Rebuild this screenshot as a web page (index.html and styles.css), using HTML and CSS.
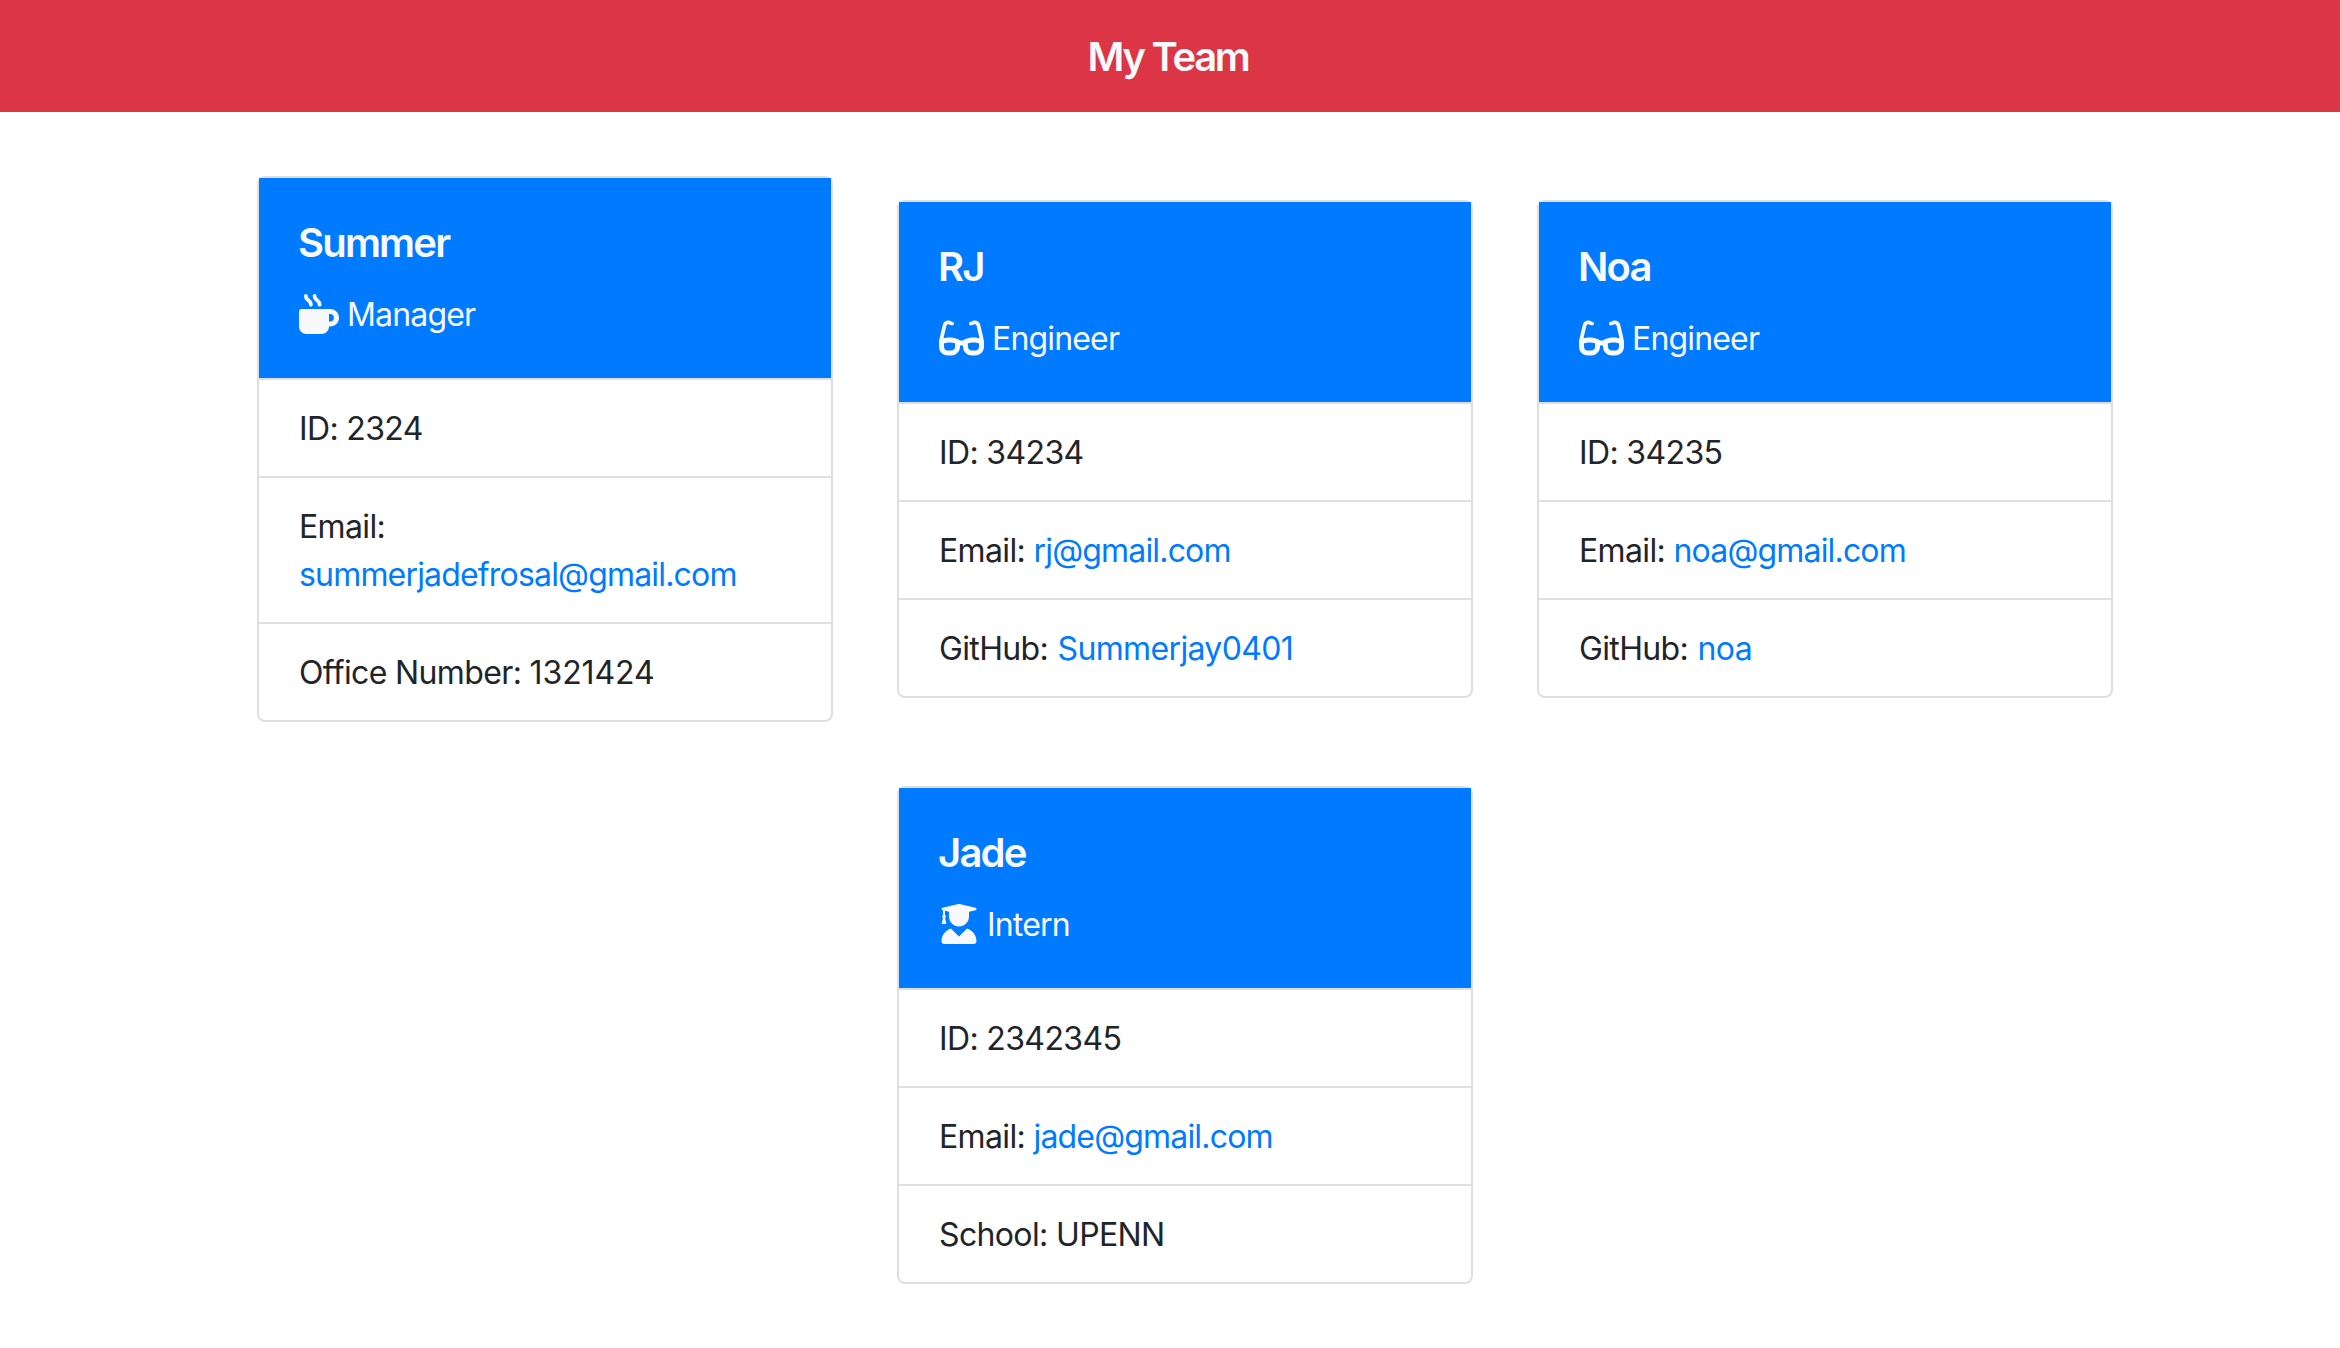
FILE: index.html
```html
<!DOCTYPE html>
<html lang="en">
<head>
<meta charset="utf-8">
<title>My Team</title>
<link rel="stylesheet" href="styles.css">
</head>
<body>
<svg class="sprite" aria-hidden="true">
  <symbol id="mug" viewBox="0 0 512 512"><path d="M88 0C74.700 0 64 10.700 64 24c0 38.900 23.400 59.400 39.100 73.100l1.100 1C120.500 112.300 128 119.900 128 136c0 13.300 10.700 24 24 24s24-10.700 24-24c0-38.900-23.400-59.400-39.100-73.100l-1.100-1C119.500 47.700 112 40.100 112 24c0-13.300-10.700-24-24-24zM32 192c-17.700 0-32 14.300-32 32V416c0 53 43 96 96 96H288c53 0 96-43 96-96h16c61.900 0 112-50.100 112-112s-50.100-112-112-112H352 32zm352 64h16c26.500 0 48 21.500 48 48s-21.500 48-48 48H384V256zM224 24c0-13.300-10.700-24-24-24s-24 10.700-24 24c0 38.900 23.400 59.400 39.100 73.100l1.100 1C232.500 112.300 240 119.900 240 136c0 13.300 10.700 24 24 24s24-10.700 24-24c0-38.900-23.400-59.400-39.100-73.100l-1.100-1C231.500 47.700 224 40.100 224 24z"/></symbol>
  <symbol id="glasses" viewBox="0 0 576 512"><path d="M118.600 80c-11.500 0-21.400 7.900-24 19.100L57 260.300c20.500-6.200 48.300-12.300 78.700-12.300c32.300 0 61.800 6.900 82.800 13.500c10.600 3.300 19.300 6.700 25.400 9.200c3.100 1.300 5.500 2.400 7.300 3.200c.9 .4 1.600 .7 2.100 1l.6 .3c5.800 2.900 10.400 7.300 13.500 12.700h41.200c3.100-5.300 7.700-9.800 13.500-12.700l.6-.3c.5-.2 1.200-.6 2.100-1c1.800-.8 4.200-1.900 7.300-3.200c6.100-2.600 14.800-5.900 25.400-9.200c21-6.600 50.400-13.500 82.800-13.500c30.400 0 58.200 6.100 78.700 12.300L481.400 99.100c-2.600-11.200-12.600-19.100-24-19.100c-3.100 0-6.200 .6-9.200 1.800L416.900 94.300c-12.300 4.900-26.300-1.100-31.200-13.400s1.100-26.300 13.400-31.200l31.300-12.500c8.600-3.400 17.700-5.200 27-5.200c33.800 0 63.100 23.300 70.800 56.200l43.900 188c1.700 7.300 2.900 14.700 3.500 22.100c.3 1.900 .5 3.800 .5 5.700V368c0 61.900-50.100 112-112 112H419.700c-59.400 0-108.500-46.400-111.800-105.800L306.600 352H269.400l-1.200 22.200C264.900 433.600 215.800 480 156.300 480H112C50.100 480 0 429.900 0 368V304c0-1.900 .2-3.800 .5-5.700c.6-7.400 1.800-14.800 3.500-22.100l43.900-188C55.500 55.300 84.800 32 118.600 32c9.200 0 18.400 1.800 27 5.200l31.300 12.500c12.300 4.900 18.300 18.900 13.400 31.200s-18.900 18.300-31.200 13.400L127.800 81.800c-2.900-1.200-6-1.800-9.200-1.800zM64 325.400V368c0 26.500 21.500 48 48 48h44.300c25.500 0 46.500-19.900 47.900-45.300l2.500-45.600c-2.300-.8-4.900-1.700-7.500-2.500c-17.200-5.400-39.900-10.500-63.600-10.500c-23.700 0-46.200 5.100-63.200 10.500c-3.100 1-5.900 1.900-8.500 2.900zM512 368V325.400c-2.600-.9-5.500-1.900-8.500-2.900c-17-5.400-39.500-10.500-63.200-10.500c-23.700 0-46.400 5.100-63.600 10.500c-2.700 .8-5.200 1.700-7.500 2.500l2.500 45.600c1.400 25.400 22.500 45.300 47.900 45.300H464c26.500 0 48-21.500 48-48z"/></symbol>
  <symbol id="graduate" viewBox="0 0 512 512"><path d="M45.630 79.750L52 81.250v58.500C45 143.900 40 151.300 40 160c0 8.375 4.625 15.380 11.120 19.750L35.500 242C33.750 248.900 37.630 256 43.130 256h41.750c5.500 0 9.375-7.125 7.625-13.100L76.880 179.800C83.380 175.400 88 168.400 88 160c0-8.750-5-16.120-12-20.250V87.130L128 99.630V160c0 70.750 57.250 128 128 128s128-57.250 128-128V99.620l82.250-19.870c18.250-4.375 18.250-27 0-31.500l-190.400-46c-13-3-26.620-3-39.630 0l-190.600 46C27.500 52.630 27.500 75.380 45.630 79.750zM359.200 312.800L256 416 152.800 312.800C82.870 335.100 32 400 32 477.300 32 496.500 47.530 512 66.670 512h378.700C464.500 512 480 496.500 480 477.300 480 400 429.100 335.100 359.200 312.800z"/></symbol>
</svg>
<header class="banner"><h1 class="banner-title">My Team</h1></header>
<main class="team">
  <section class="card">
    <div class="card-header">
      <h2 class="name">Summer</h2>
      <div class="role"><svg class="icon"><use href="#mug"/></svg><span class="role-label">Manager</span></div>
    </div>
    <ul class="details">
      <li>ID: 2324</li>
      <li>Email: <a class="email" href="#">summerjadefrosal@gmail.com</a></li>
      <li>Office Number: <span class="office">1321424</span></li>
    </ul>
  </section>
  <section class="card">
    <div class="card-header">
      <h2 class="name">RJ</h2>
      <div class="role"><svg class="icon icon-wide"><use href="#glasses"/></svg><span class="role-label">Engineer</span></div>
    </div>
    <ul class="details">
      <li>ID: 34234</li>
      <li>Email: <a class="email" href="#">rj@gmail.com</a></li>
      <li>GitHub: <a class="github" href="#">Summerjay0401</a></li>
    </ul>
  </section>
  <section class="card">
    <div class="card-header">
      <h2 class="name">Noa</h2>
      <div class="role"><svg class="icon icon-wide"><use href="#glasses"/></svg><span class="role-label">Engineer</span></div>
    </div>
    <ul class="details">
      <li>ID: 34235</li>
      <li>Email: <a class="email" href="#">noa@gmail.com</a></li>
      <li>GitHub: <a class="github" href="#">noa</a></li>
    </ul>
  </section>
  <section class="card">
    <div class="card-header">
      <h2 class="name">Jade</h2>
      <div class="role"><svg class="icon"><use href="#graduate"/></svg><span class="role-label">Intern</span></div>
    </div>
    <ul class="details">
      <li>ID: 2342345</li>
      <li>Email: <a class="email" href="#">jade@gmail.com</a></li>
      <li>School: UPENN</li>
    </ul>
  </section>
</main>
</body>
</html>
```
FILE: styles.css
```css
* { box-sizing: border-box; }
body {
  margin: 0;
  background: #fff;
  color: #212529;
  font: 400 32px/48px Inter, "Liberation Sans", sans-serif;
  letter-spacing: -0.64px;
}
.sprite { display: none; }
.banner {
  height: 112px;
  padding: 2px 4px 0 0;
  display: flex;
  align-items: center;
  justify-content: center;
  background: #dc3545;
  color: #f8f9fa;
}
.banner-title, .name {
  margin: 0;
  font-size: 40px;
  line-height: 48px;
  font-weight: 600;
}
.banner-title { letter-spacing: -2.3px; }
.team {
  width: 1920px;
  margin: 64px 0 0 225px;
  padding: 0 32px;
  display: flex;
  flex-wrap: wrap;
  justify-content: center;
  align-items: center;
  gap: 64px;
}
.card {
  width: 576px;
  border: 2px solid #dfdfdf;
  border-radius: 8px;
}
.card-header {
  height: 200px;
  padding: 41px 40px 39px;
  background: #007bff;
  color: #f8f9fa;
}
.name {
  margin: 0 0 23px -1px;
  letter-spacing: -1.8px;
}
.role { display: flex; align-items: center; gap: 8px; }
.role-label {
  padding-top: 2px;
  line-height: 46px;
  letter-spacing: -0.83px;
}
.icon { width: 40px; height: 40px; fill: currentColor; }
.icon-wide { width: 45px; }
.details { margin: 0; padding: 0; list-style: none; }
.details li {
  padding: 25px 40px 23px;
  border-top: 2px solid #dfdfdf;
}
.details a {
  color: #007bff;
  text-decoration: none;
}
.email { letter-spacing: -0.82px; }
.github { margin-left: 1px; }
.office { letter-spacing: -0.1px; }
```
